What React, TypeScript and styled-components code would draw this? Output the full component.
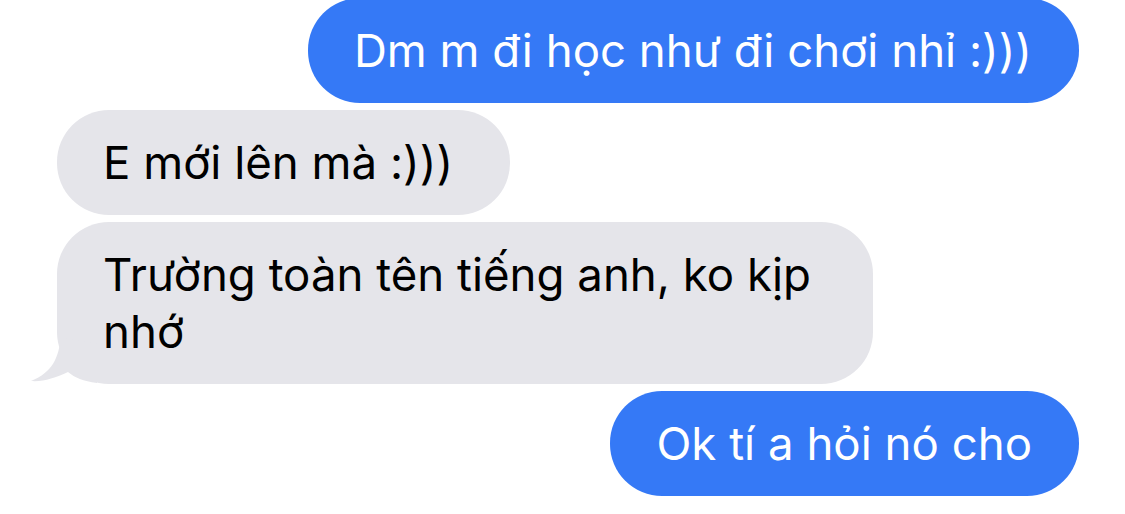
import { createGlobalStyle } from 'styled-components';
import styled from 'styled-components';

const GlobalStyle = createGlobalStyle`
  html, body {
    margin: 0;
    padding: 0;
    background: #ffffff;
  }
  body {
    font-family: Inter, "Noto Sans", "Liberation Sans", sans-serif;
    -webkit-font-smoothing: antialiased;
  }
`;

const palette = {
  blue: '#3579f6',
  gray: '#e5e5ea',
};

const Thread = styled.div`
  width: 1125px;
  height: 514px;
  overflow: hidden;
  padding: 0 46px 0 57px;
  box-sizing: border-box;

  .thread-inner {
    display: flex;
    flex-direction: column;
    gap: 7px;
    margin-top: -2px;
  }
`;

const Bubble = styled.div<{ $mine?: boolean; $maxWidth?: number; $padRight?: number }>`
  position: relative;
  align-self: ${(p) => (p.$mine ? 'flex-end' : 'flex-start')};
  box-sizing: border-box;
  max-width: ${(p) => (p.$maxWidth ? `${p.$maxWidth}px` : 'none')};
  padding: 24px ${(p) => p.$padRight ?? 47}px 24px 46px;
  border-radius: 52px;
  background-color: ${(p) => (p.$mine ? palette.blue : palette.gray)};
  color: ${(p) => (p.$mine ? '#ffffff' : '#000000')};
  font-size: 45.6px;
  line-height: 57px;
  white-space: ${(p) => (p.$maxWidth ? 'normal' : 'nowrap')};

  .tail {
    position: absolute;
    left: -30px;
    bottom: 0;
    width: 80px;
    height: 50px;
    overflow: visible;
  }
`;

const Tail = () => (
  <svg className="tail" viewBox="0 0 80 50">
    <path
      d="M34 4 C31 24 26 38 4 47 C16 48 28 44 41 38 C48 44 56 47 70 49 L70 10 Z"
      fill={palette.gray}
    />
  </svg>
);

const messages = [
  { id: 1, mine: true, text: 'Dm m đi học như đi chơi nhỉ :)))' },
  { id: 2, mine: false, text: 'E mới lên mà :)))', padRight: 57 },
  { id: 3, mine: false, text: 'Trường toàn tên tiếng anh, ko kịp nhớ', maxWidth: 816, tail: true },
  { id: 4, mine: true, text: 'Ok tí a hỏi nó cho' },
];

const App = () => (
  <>
    <GlobalStyle />
    <Thread>
      <div className="thread-inner">
        {messages.map((m) => (
          <Bubble key={m.id} $mine={m.mine} $maxWidth={m.maxWidth} $padRight={m.padRight}>
            {m.tail && <Tail />}
            {m.text}
          </Bubble>
        ))}
      </div>
    </Thread>
  </>
);

export default App;
